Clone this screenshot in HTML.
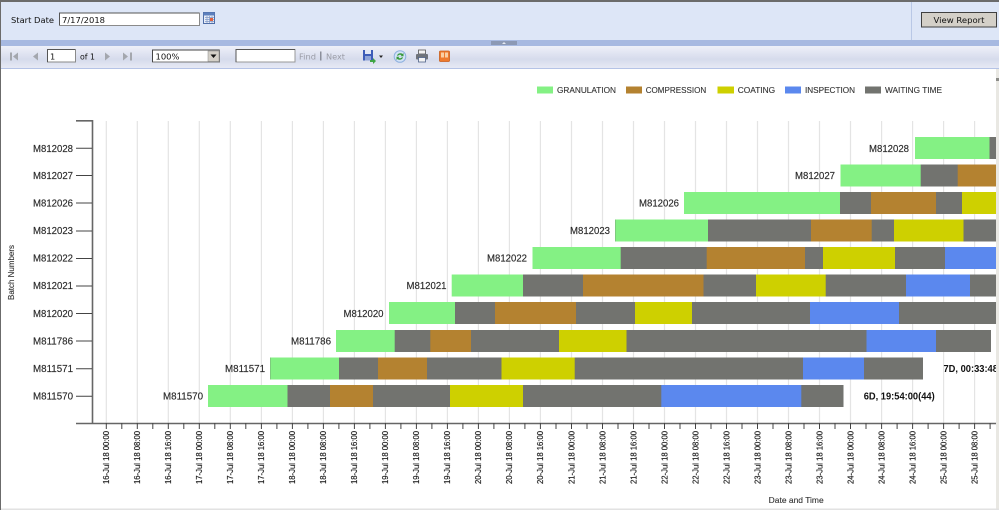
<!DOCTYPE html>
<html lang="en">
<head>
<meta charset="utf-8">
<title>Report Viewer</title>
<style>
html,body{margin:0;padding:0;background:#fff;width:999px;height:510px;overflow:hidden}
svg{display:block}
.v{font-family:"DejaVu Sans","Liberation Sans",sans-serif;font-size:8.2px;fill:#111}
.c{font-family:"Liberation Sans",Arial,sans-serif;font-size:9.8px;fill:#2a2a2a;stroke:#2a2a2a;stroke-width:.15px}
.l{font-family:"Liberation Sans",Arial,sans-serif;font-size:8.4px;fill:#333;stroke:#333;stroke-width:.12px}
.t{font-family:"Liberation Sans",Arial,sans-serif;font-size:7.9px;fill:#222;stroke:#222;stroke-width:.18px}
.b{font-family:"Liberation Sans",Arial,sans-serif;font-size:9.8px;font-weight:bold;fill:#111}
</style>
</head>
<body>
<svg width="999" height="510" viewBox="0 0 999 510" xmlns="http://www.w3.org/2000/svg">
<defs>
<linearGradient id="tb" x1="0" y1="0" x2="0" y2="1">
<stop offset="0" stop-color="#eef0f9"/><stop offset=".6" stop-color="#d6dbec"/><stop offset="1" stop-color="#e6e9f4"/>
</linearGradient>
<clipPath id="cl"><rect x="0" y="0" width="996" height="510"/></clipPath>
</defs>

<!-- frame / header -->
<rect x="0" y="0" width="999" height="510" fill="#fff"/>
<rect x="0" y="2" width="999" height="38" fill="#dde6f7"/>
<rect x="0" y="0" width="999" height="2" fill="#6b6b6b"/>
<rect x="911" y="2" width="1" height="38" fill="#b9c8e6"/>
<text class="v" x="11" y="23" textLength="43" lengthAdjust="spacingAndGlyphs">Start Date</text>
<rect x="59.5" y="13" width="140" height="12.5" fill="#fff" stroke="#8a8a8a"/>
<path d="M59.5 25V13H199" fill="none" stroke="#555"/>
<text class="v" x="62" y="23" textLength="43" lengthAdjust="spacingAndGlyphs">7/17/2018</text>
<rect x="203.5" y="12.5" width="11" height="11" fill="#e8edf7" stroke="#4f6ea8"/>
<rect x="203.5" y="12.5" width="11" height="3" fill="#5b7fbd"/>
<path d="M205 17.5h9M205 19.5h9M205 21.5h9M207 16v7M209.5 16v7M212 16v7" stroke="#7f98c6" stroke-width=".7"/>
<rect x="210" y="18" width="3" height="3" fill="#e2603c"/>
<rect x="921.5" y="12.5" width="75" height="14.5" fill="#d4d0c8" stroke="#404040"/>
<text class="v" x="959" y="23" text-anchor="middle" textLength="51" lengthAdjust="spacingAndGlyphs">View Report</text>

<!-- splitter -->
<rect x="0" y="40" width="999" height="6" fill="#a7b9e1"/>
<rect x="491" y="41" width="26" height="4" fill="#8c99b5"/>
<path d="M502 44h4l-2-2z" fill="#e5e9f2"/>

<!-- toolbar -->
<rect x="0" y="46" width="999" height="22" fill="url(#tb)"/>
<rect x="0" y="68" width="999" height="1" fill="#b5c3e6"/>

<path d="M10 52.5h2v8h-2zM18 52.5v8l-5-4z" fill="#a4a7ae"/>
<path d="M38 52.5v8l-5-4z" fill="#a4a7ae"/>
<rect x="47.5" y="49.5" width="28" height="12.5" fill="#fff" stroke="#8a8a8a"/>
<path d="M47.5 62V49.5H75" fill="none" stroke="#555"/>
<text class="v" x="50" y="59.5">1</text>
<text class="v" x="80" y="59.5" textLength="15" lengthAdjust="spacingAndGlyphs">of 1</text>
<path d="M105 52.5v8l5-4z" fill="#a4a7ae"/>
<path d="M123 52.5v8l5-4zM130 52.5h2v8h-2z" fill="#a4a7ae"/>
<rect x="152.5" y="50" width="67" height="12" fill="#fff" stroke="#777"/>
<path d="M152.5 62V50H219" fill="none" stroke="#444"/>
<text class="v" x="155.5" y="59.5" textLength="24" lengthAdjust="spacingAndGlyphs">100%</text>
<rect x="208" y="51" width="11" height="10.5" fill="#d4d0c8" stroke="#888" stroke-width=".5"/>
<path d="M210.5 54.5h6l-3 3.500z" fill="#111"/>
<rect x="236" y="49.5" width="59" height="12.5" fill="#fff" stroke="#999"/>
<path d="M236 62V49.5H295" fill="none" stroke="#555"/>
<text class="v" x="299" y="59.5" textLength="17" lengthAdjust="spacingAndGlyphs" style="fill:#9a9ca6">Find</text>
<rect x="320" y="51.5" width="1.5" height="9" fill="#8b8f9b"/>
<text class="v" x="326" y="59.5" textLength="19" lengthAdjust="spacingAndGlyphs" style="fill:#9a9ca6">Next</text>

<!-- save -->
<rect x="363" y="50" width="10" height="10.5" fill="#3c5cb8"/>
<rect x="365" y="50" width="6" height="4" fill="#dfe6f5"/>
<rect x="365" y="56" width="6" height="4.5" fill="#8ea4d8"/>
<path d="M370 60h3v-2l3 3-3 3v-2h-3z" fill="#3fa544"/>
<path d="M379 55.5h4l-2 2.500z" fill="#222"/>
<!-- refresh -->
<circle cx="400" cy="56.5" r="5.8" fill="#d3e2f6" stroke="#8db0df"/>
<path d="M397 55.5a3.500 3.500 0 0 1 5.500-1.500l1-1v3.200h-3l1-1a2.400 2.400 0 0 0-3.500.7z" fill="#3a9b3c"/>
<path d="M403 57.5a3.500 3.500 0 0 1-5.500 1.500l-1 1v-3.200h3l-1 1a2.400 2.400 0 0 0 3.500-.7z" fill="#3a9b3c"/>
<!-- print -->
<rect x="418.5" y="50" width="7" height="4" fill="#f2f2f2" stroke="#555" stroke-width=".8"/>
<rect x="416" y="54" width="12" height="5.500" rx="1" fill="#6f737a"/>
<rect x="418.500" y="57.5" width="7" height="4.500" fill="#f4f4f4" stroke="#4f6288" stroke-width=".8"/>
<!-- orange layout -->
<rect x="439.5" y="51" width="10" height="10.500" rx="1" fill="#ee7a2e" stroke="#c95e1c" stroke-width=".8"/>
<rect x="441" y="52.5" width="3" height="5" fill="#f9cfa5"/>
<rect x="445" y="52.5" width="3" height="5" fill="#f9cfa5"/>

<!-- left border, right scrollbar, bottom -->
<rect x="0" y="0" width="1" height="510" fill="#6b6b6b"/>
<rect x="996" y="69" width="3" height="441" fill="#e9e8e3"/>
<rect x="996" y="78" width="3" height="3" fill="#8c8c88"/>
<rect x="1" y="508.5" width="998" height="1.5" fill="#e2e2e2"/>

<!-- legend -->
<rect x="537" y="86.5" width="16" height="7" fill="#84f184"/>
<text class="l" x="557" y="93" textLength="59" lengthAdjust="spacingAndGlyphs">GRANULATION</text>
<rect x="626" y="86.5" width="16" height="7" fill="#b48230"/>
<text class="l" x="645.7" y="93" textLength="60.5" lengthAdjust="spacingAndGlyphs">COMPRESSION</text>
<rect x="717.5" y="86.5" width="16.5" height="7" fill="#ced000"/>
<text class="l" x="737.7" y="93" textLength="37.5" lengthAdjust="spacingAndGlyphs">COATING</text>
<rect x="785" y="86.5" width="16" height="7" fill="#5b88ee"/>
<text class="l" x="805" y="93" textLength="50" lengthAdjust="spacingAndGlyphs">INSPECTION</text>
<rect x="865" y="86.5" width="16" height="7" fill="#72736f"/>
<text class="l" x="885" y="93" textLength="57" lengthAdjust="spacingAndGlyphs">WAITING TIME</text>

<!-- grid -->
<path fill="none" stroke="#e4e4e4" stroke-width="1.2" d="M106.3 121V423M137.3 121V423M168.3 121V423M199.3 121V423M230.3 121V423M261.4 121V423M292.4 121V423M323.4 121V423M354.4 121V423M385.4 121V423M416.4 121V423M447.4 121V423M478.4 121V423M509.4 121V423M540.4 121V423M571.5 121V423M602.5 121V423M633.5 121V423M664.5 121V423M695.5 121V423M726.5 121V423M757.5 121V423M788.5 121V423M819.5 121V423M850.5 121V423M881.6 121V423M912.6 121V423M943.6 121V423M974.6 121V423"/>

<!-- bars -->
<path fill="#72736f" d="M208 385H843.5V407H208zM270 357.5H923V379.5H270zM336 330H991V352H336zM389 302H996V324H389zM452 274.5H996V296.5H452zM533 247H996V269H533zM615 219.5H996V241.5H615zM684 192H996V214H684zM840.5 164.5H996V186.5H840.5zM915 137H996V159H915z"/>
<path fill="#84f184" d="M208 385H287.5V407H208zM270.3 357.5H339V379.5H270.3zM336 330H394.7V352H336zM389 302H455V324H389zM451.7 274.5H523V296.5H451.7zM532.5 247H620.7V269H532.5zM615.3 219.5H708V241.5H615.3zM684 192H840V214H684zM840.5 164.5H920.7V186.5H840.5zM915 137H989.5V159H915z"/>
<path fill="#b48230" d="M330 385H373V407H330zM378 357.5H427V379.5H378zM430.3 330H471V352H430.3zM495 302H576V324H495zM583 274.5H703.5V296.5H583zM706.7 247H805V269H706.7zM811 219.5H871.7V241.5H811zM871 192H936V214H871zM957.7 164.5H996V186.5H957.7z"/>
<path fill="#ced000" d="M450 385H523V407H450zM501.5 357.5H574.7V379.5H501.5zM559 330H626.5V352H559zM635 302H692V324H635zM756 274.5H825.7V296.5H756zM823 247H895V269H823zM894 219.5H963.5V241.5H894zM962 192H996V214H962z"/>
<path fill="#5b88ee" d="M661.3 385H801.3V407H661.3zM803 357.5H864V379.5H803zM866.5 330H936V352H866.5zM810 302H899V324H810zM906 274.5H970V296.5H906zM945 247H996V269H945z"/>

<!-- axes -->
<path fill="none" stroke="#666" stroke-width="1.6" d="M76 120.8H92.5V423.5M76 423.5H996"/>
<path fill="none" stroke="#444" stroke-width="1" d="M76 148.3H92M76 175.5H92M76 203H92M76 231H92M76 258.5H92M76 286H92M76 313.5H92M76 341H92M76 368.7H92M76 396.3H92"/>
<path fill="none" stroke="#444" stroke-width="1" d="M106.3 423V429M121.8 423V429M137.3 423V429M152.8 423V429M168.3 423V429M183.8 423V429M199.3 423V429M214.8 423V429M230.3 423V429M245.8 423V429M261.4 423V429M276.9 423V429M292.4 423V429M307.9 423V429M323.4 423V429M338.9 423V429M354.4 423V429M369.9 423V429M385.4 423V429M400.9 423V429M416.4 423V429M431.9 423V429M447.4 423V429M462.9 423V429M478.4 423V429M493.9 423V429M509.4 423V429M524.9 423V429M540.4 423V429M556 423V429M571.5 423V429M587 423V429M602.5 423V429M618 423V429M633.5 423V429M649 423V429M664.5 423V429M680 423V429M695.5 423V429M711 423V429M726.5 423V429M742 423V429M757.5 423V429M773 423V429M788.5 423V429M804 423V429M819.5 423V429M835 423V429M850.5 423V429M866 423V429M881.6 423V429M897.1 423V429M912.6 423V429M928.1 423V429M943.6 423V429M959.1 423V429M974.6 423V429M990.1 423V429"/>

<!-- y axis labels -->
<g text-anchor="end">
<text class="c" x="73" y="151.8" textLength="40" lengthAdjust="spacingAndGlyphs">M812028</text>
<text class="c" x="73" y="179" textLength="40" lengthAdjust="spacingAndGlyphs">M812027</text>
<text class="c" x="73" y="206.5" textLength="40" lengthAdjust="spacingAndGlyphs">M812026</text>
<text class="c" x="73" y="234" textLength="40" lengthAdjust="spacingAndGlyphs">M812023</text>
<text class="c" x="73" y="261.5" textLength="40" lengthAdjust="spacingAndGlyphs">M812022</text>
<text class="c" x="73" y="289" textLength="40" lengthAdjust="spacingAndGlyphs">M812021</text>
<text class="c" x="73" y="317" textLength="40" lengthAdjust="spacingAndGlyphs">M812020</text>
<text class="c" x="73" y="344.5" textLength="40" lengthAdjust="spacingAndGlyphs">M811786</text>
<text class="c" x="73" y="372" textLength="40" lengthAdjust="spacingAndGlyphs">M811571</text>
<text class="c" x="73" y="399.5" textLength="40" lengthAdjust="spacingAndGlyphs">M811570</text>
<!-- bar labels -->
<text class="c" x="909" y="151.8" textLength="40" lengthAdjust="spacingAndGlyphs">M812028</text>
<text class="c" x="835" y="179" textLength="40" lengthAdjust="spacingAndGlyphs">M812027</text>
<text class="c" x="679" y="206.5" textLength="40" lengthAdjust="spacingAndGlyphs">M812026</text>
<text class="c" x="610" y="234" textLength="40" lengthAdjust="spacingAndGlyphs">M812023</text>
<text class="c" x="527" y="261.5" textLength="40" lengthAdjust="spacingAndGlyphs">M812022</text>
<text class="c" x="446.5" y="289" textLength="40" lengthAdjust="spacingAndGlyphs">M812021</text>
<text class="c" x="383.5" y="317" textLength="40" lengthAdjust="spacingAndGlyphs">M812020</text>
<text class="c" x="331" y="344.5" textLength="40" lengthAdjust="spacingAndGlyphs">M811786</text>
<text class="c" x="265" y="372" textLength="40" lengthAdjust="spacingAndGlyphs">M811571</text>
<text class="c" x="203" y="399.5" textLength="40" lengthAdjust="spacingAndGlyphs">M811570</text>
</g>
<text class="b" x="863.7" y="399.5" textLength="71" lengthAdjust="spacingAndGlyphs">6D, 19:54:00(44)</text>
<g clip-path="url(#cl)"><text class="b" x="943.5" y="372" textLength="71" lengthAdjust="spacingAndGlyphs">7D, 00:33:48(44)</text></g>

<!-- axis titles -->
<text class="l" transform="translate(14,300) rotate(-90)" textLength="55" lengthAdjust="spacingAndGlyphs" style="font-size:8px">Batch Numbers</text>
<text class="l" x="768.7" y="503" textLength="55" lengthAdjust="spacingAndGlyphs">Date and Time</text>

<!-- x axis labels -->
<g>
<text class="t" transform="translate(109.1,484) rotate(-90)" textLength="53" lengthAdjust="spacingAndGlyphs">16-Jul 18 00:00</text>
<text class="t" transform="translate(140.1,484) rotate(-90)" textLength="53" lengthAdjust="spacingAndGlyphs">16-Jul 18 08:00</text>
<text class="t" transform="translate(171.1,484) rotate(-90)" textLength="53" lengthAdjust="spacingAndGlyphs">16-Jul 18 16:00</text>
<text class="t" transform="translate(202.1,484) rotate(-90)" textLength="53" lengthAdjust="spacingAndGlyphs">17-Jul 18 00:00</text>
<text class="t" transform="translate(233.1,484) rotate(-90)" textLength="53" lengthAdjust="spacingAndGlyphs">17-Jul 18 08:00</text>
<text class="t" transform="translate(264.2,484) rotate(-90)" textLength="53" lengthAdjust="spacingAndGlyphs">17-Jul 18 16:00</text>
<text class="t" transform="translate(295.2,484) rotate(-90)" textLength="53" lengthAdjust="spacingAndGlyphs">18-Jul 18 00:00</text>
<text class="t" transform="translate(326.2,484) rotate(-90)" textLength="53" lengthAdjust="spacingAndGlyphs">18-Jul 18 08:00</text>
<text class="t" transform="translate(357.2,484) rotate(-90)" textLength="53" lengthAdjust="spacingAndGlyphs">18-Jul 18 16:00</text>
<text class="t" transform="translate(388.2,484) rotate(-90)" textLength="53" lengthAdjust="spacingAndGlyphs">19-Jul 18 00:00</text>
<text class="t" transform="translate(419.2,484) rotate(-90)" textLength="53" lengthAdjust="spacingAndGlyphs">19-Jul 18 08:00</text>
<text class="t" transform="translate(450.2,484) rotate(-90)" textLength="53" lengthAdjust="spacingAndGlyphs">19-Jul 18 16:00</text>
<text class="t" transform="translate(481.2,484) rotate(-90)" textLength="53" lengthAdjust="spacingAndGlyphs">20-Jul 18 00:00</text>
<text class="t" transform="translate(512.2,484) rotate(-90)" textLength="53" lengthAdjust="spacingAndGlyphs">20-Jul 18 08:00</text>
<text class="t" transform="translate(543.2,484) rotate(-90)" textLength="53" lengthAdjust="spacingAndGlyphs">20-Jul 18 16:00</text>
<text class="t" transform="translate(574.3,484) rotate(-90)" textLength="53" lengthAdjust="spacingAndGlyphs">21-Jul 18 00:00</text>
<text class="t" transform="translate(605.3,484) rotate(-90)" textLength="53" lengthAdjust="spacingAndGlyphs">21-Jul 18 08:00</text>
<text class="t" transform="translate(636.3,484) rotate(-90)" textLength="53" lengthAdjust="spacingAndGlyphs">21-Jul 18 16:00</text>
<text class="t" transform="translate(667.3,484) rotate(-90)" textLength="53" lengthAdjust="spacingAndGlyphs">22-Jul 18 00:00</text>
<text class="t" transform="translate(698.3,484) rotate(-90)" textLength="53" lengthAdjust="spacingAndGlyphs">22-Jul 18 08:00</text>
<text class="t" transform="translate(729.3,484) rotate(-90)" textLength="53" lengthAdjust="spacingAndGlyphs">22-Jul 18 16:00</text>
<text class="t" transform="translate(760.3,484) rotate(-90)" textLength="53" lengthAdjust="spacingAndGlyphs">23-Jul 18 00:00</text>
<text class="t" transform="translate(791.3,484) rotate(-90)" textLength="53" lengthAdjust="spacingAndGlyphs">23-Jul 18 08:00</text>
<text class="t" transform="translate(822.3,484) rotate(-90)" textLength="53" lengthAdjust="spacingAndGlyphs">23-Jul 18 16:00</text>
<text class="t" transform="translate(853.3,484) rotate(-90)" textLength="53" lengthAdjust="spacingAndGlyphs">24-Jul 18 00:00</text>
<text class="t" transform="translate(884.4,484) rotate(-90)" textLength="53" lengthAdjust="spacingAndGlyphs">24-Jul 18 08:00</text>
<text class="t" transform="translate(915.4,484) rotate(-90)" textLength="53" lengthAdjust="spacingAndGlyphs">24-Jul 18 16:00</text>
<text class="t" transform="translate(946.4,484) rotate(-90)" textLength="53" lengthAdjust="spacingAndGlyphs">25-Jul 18 00:00</text>
<text class="t" transform="translate(977.4,484) rotate(-90)" textLength="53" lengthAdjust="spacingAndGlyphs">25-Jul 18 08:00</text>
</g>
</svg>
</body>
</html>
